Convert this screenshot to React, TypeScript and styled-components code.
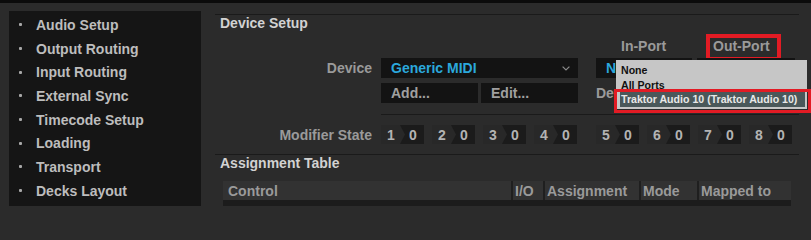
import React from 'react';
import styled, { createGlobalStyle } from 'styled-components';

const Global = createGlobalStyle`
  html, body { margin: 0; padding: 0; background: #2b2b2b; overflow: hidden; }
  #root { width: 811px; height: 206px; }
`;

const Window = styled.div`
  width: 811px;
  height: 206px;
  box-sizing: border-box;
  border-top: 3px solid #0b0b0b;
  background: #2b2b2b;
  display: flex;
  font-family: "Liberation Sans", Arial, sans-serif;
  font-weight: 700;
  font-size: 14px;
  overflow: hidden;
`;

const Sidebar = styled.ul`
  margin: 8px 0 0 9px;
  padding: 2px 0 0 9.5px;
  width: 192px;
  box-sizing: border-box;
  background: #151515;
  list-style: none;
  flex-shrink: 0;
`;

const NavItem = styled.li`
  height: 23.7px;
  display: flex;
  align-items: center;
  gap: 14.5px;
  color: #bdbdbd;
  white-space: nowrap;
  &::before {
    content: '';
    width: 3px;
    height: 3px;
    background: #a8a8a8;
    border-radius: 1px;
  }
`;

const Main = styled.div`
  flex: 1;
  min-width: 0;
  padding: 11px 12px 0 14px;
  display: flex;
  flex-direction: column;
`;

const SectionTitle = styled.div<{ $line?: boolean }>`
  border-top: ${(p) => (p.$line ? '1px solid #1a1a1a' : 'none')};
  padding-left: 5px;
  height: 17px;
  line-height: 17px;
  color: #d2d2d2;
  white-space: nowrap;
`;

const Row = styled.div<{ $top: number; $h: number }>`
  display: flex;
  align-items: center;
  margin-top: ${(p) => p.$top}px;
  height: ${(p) => p.$h}px;
  flex-shrink: 0;
`;

const Label = styled.div`
  width: 166px;
  flex-shrink: 0;
  box-sizing: border-box;
  padding-right: 9px;
  text-align: right;
  color: #9a9a9a;
  white-space: nowrap;
`;

const Spacer = styled.div<{ $w: number }>`
  width: ${(p) => p.$w}px;
  flex-shrink: 0;
`;

const PortLabel = styled.div<{ $w: number; $pad: number; $mark?: boolean }>`
  width: ${(p) => p.$w}px;
  box-sizing: border-box;
  padding-left: ${(p) => p.$pad}px;
  color: #9a9a9a;
  white-space: nowrap;
  flex-shrink: 0;
  & > span {
    position: relative;
  }
  & > span::after {
    content: ${(p) => (p.$mark ? "''" : 'none')};
    position: absolute;
    left: -7px;
    right: -11px;
    top: -4px;
    bottom: -7px;
    border: 4px solid #e21b24;
  }
`;

const Select = styled.div<{ $w: number; $ml?: number }>`
  width: ${(p) => p.$w}px;
  margin-left: ${(p) => p.$ml ?? 0}px;
  height: 20px;
  box-sizing: border-box;
  background: #131313;
  display: flex;
  align-items: center;
  justify-content: space-between;
  padding: 0 8px 0 10px;
  color: #2ba8dc;
  white-space: nowrap;
  overflow: hidden;
  flex-shrink: 0;
`;

const Chevron = () => (
  <svg width="8" height="5" viewBox="0 0 8 5">
    <polyline points="0.6,0.6 4,4 7.4,0.6" fill="none" stroke="#8a8a8a" strokeWidth="1.2" />
  </svg>
);

const Button = styled.div<{ $ml?: number }>`
  width: 97px;
  height: 20px;
  margin-left: ${(p) => p.$ml ?? 0}px;
  box-sizing: border-box;
  background: #131313;
  color: #a0a0a0;
  display: flex;
  align-items: center;
  padding-left: 10px;
  flex-shrink: 0;
`;

const PortGroup = styled.div`
  position: relative;
  display: flex;
  align-items: center;
  margin-left: 18px;
`;

const SideLabel = styled.div`
  margin-left: 18px;
  color: #9a9a9a;
  white-space: nowrap;
`;

const Popup = styled.ul`
  position: absolute;
  left: 20px;
  top: 2px;
  width: 191px;
  margin: 0;
  padding: 3px 0 2px;
  list-style: none;
  background: #c6c6c6;
  font-size: 10.6px;
  z-index: 3;
`;

const PopItem = styled.li<{ $active?: boolean }>`
  position: relative;
  height: 14.5px;
  line-height: 14.5px;
  margin: 0 2px 0 4px;
  padding-left: 1px;
  white-space: nowrap;
  color: ${(p) => (p.$active ? '#e8e8e8' : '#111')};
  background: ${(p) => (p.$active ? '#4a585a' : 'transparent')};
  &::after {
    content: ${(p) => (p.$active ? "''" : 'none')};
    position: absolute;
    left: -6px;
    right: -6px;
    top: -3px;
    bottom: -6px;
    border: 3px solid #e21b24;
  }
`;

const Divider = styled.div<{ $top: number; $ml: number }>`
  margin-top: ${(p) => p.$top}px;
  margin-left: ${(p) => p.$ml}px;
  height: 1px;
  background: #1a1a1a;
  flex-shrink: 0;
`;

const ModGroup = styled.div<{ $ml?: number }>`
  display: flex;
  gap: 8px;
  margin-left: ${(p) => p.$ml ?? 0}px;
`;

const ModBox = styled.div`
  width: 43px;
  height: 19px;
  background: #1b1b1b;
  display: flex;
  color: #b3b3b3;
`;

const ModKey = styled.div`
  width: 24px;
  box-sizing: border-box;
  padding-left: 6px;
  background: #282828;
  clip-path: polygon(0 0, 19px 0, 24px 50%, 19px 100%, 0 100%);
  display: flex;
  align-items: center;
`;

const ModVal = styled.div`
  flex: 1;
  padding-left: 4px;
  display: flex;
  align-items: center;
`;

const Table = styled.div`
  margin: 9px 0 0 8px;
  width: 568px;
  flex: 1;
  background: #1c1c1c;
  display: flex;
  flex-direction: column;
`;

const HeaderRow = styled.div`
  display: grid;
  grid-template-columns: 288px 30px 94px 56px 92px;
  column-gap: 2px;
  height: 19px;
  background: #1f1f1f;
`;

const HeadCell = styled.div<{ $pad?: number }>`
  background: #323232;
  color: #9a9a9a;
  padding-left: ${(p) => p.$pad ?? 2}px;
  display: flex;
  align-items: center;
  white-space: nowrap;
  overflow: hidden;
`;

const nav = [
  'Audio Setup',
  'Output Routing',
  'Input Routing',
  'External Sync',
  'Timecode Setup',
  'Loading',
  'Transport',
  'Decks Layout',
];

const Mod = ({ n }: { n: number }) => (
  <ModBox>
    <ModKey>{n}</ModKey>
    <ModVal>0</ModVal>
  </ModBox>
);

export default function App() {
  return (
    <>
      <Global />
      <Window>
        <Sidebar>
          {nav.map((n) => (
            <NavItem key={n}>{n}</NavItem>
          ))}
        </Sidebar>
        <Main>
          <SectionTitle $line>Device Setup</SectionTitle>
          <Row $top={5} $h={17}>
            <Spacer $w={166 + 197 + 18} />
            <PortLabel $w={101} $pad={25}>
              <span>In-Port</span>
            </PortLabel>
            <PortLabel $w={98} $pad={16} $mark>
              <span>Out-Port</span>
            </PortLabel>
          </Row>
          <Row $top={4} $h={20}>
            <Label>Device</Label>
            <Select $w={197}>
              <span>Generic MIDI</span>
              <Chevron />
            </Select>
            <PortGroup>
              <Select $w={96}>
                <span>None</span>
              </Select>
              <Select $w={98} $ml={5}>
                <span>None</span>
              </Select>
              <Popup>
                <PopItem>None</PopItem>
                <PopItem>All Ports</PopItem>
                <PopItem $active>Traktor Audio 10 (Traktor Audio 10)</PopItem>
              </Popup>
            </PortGroup>
          </Row>
          <Row $top={5} $h={20}>
            <Spacer $w={166} />
            <Button>Add...</Button>
            <Button $ml={3}>Edit...</Button>
            <SideLabel>Device Target</SideLabel>
          </Row>
          <Divider $top={11} $ml={166} />
          <Row $top={10} $h={19}>
            <Label>Modifier State</Label>
            <ModGroup>
              {[1, 2, 3, 4].map((n) => (
                <Mod key={n} n={n} />
              ))}
            </ModGroup>
            <ModGroup $ml={19}>
              {[5, 6, 7, 8].map((n) => (
                <Mod key={n} n={n} />
              ))}
            </ModGroup>
          </Row>
          <Divider $top={10} $ml={0} />
          <SectionTitle>Assignment Table</SectionTitle>
          <Table>
            <HeaderRow>
              <HeadCell $pad={5}>Control</HeadCell>
              <HeadCell>I/O</HeadCell>
              <HeadCell>Assignment</HeadCell>
              <HeadCell>Mode</HeadCell>
              <HeadCell>Mapped to</HeadCell>
            </HeaderRow>
          </Table>
        </Main>
      </Window>
    </>
  );
}
